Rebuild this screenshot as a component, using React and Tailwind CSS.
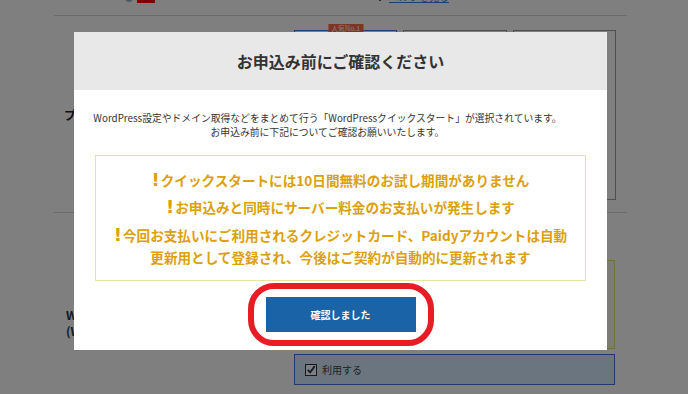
import React from "react";

const Card = ({ active, badge }) => (
    <div className={`relative h-[170px] flex-1 border bg-white ${active ? "border-[#3d7ef5]" : "border-[#9e9e9e]"}`}>
        {badge && (
            <span className="absolute -top-[7px] left-1/2 -translate-x-1/2 bg-[#ff6a48] px-[3px] text-[7px] leading-[9px] text-white">
                {badge}
            </span>
        )}
    </div>
);

const Notice = ({ children, className = "" }) => (
    <p className={`text-[13.6px] font-bold leading-[22px] text-[#dca00c] ${className}`}>
        <span className="mr-[1px] font-['DejaVu_Sans'] text-[18px] font-bold leading-none">!</span>
        {children}
    </p>
);

const App = () => {
    return (
        <div className="relative h-[394px] w-[688px] overflow-hidden bg-white font-['Noto_Sans_CJK_JP',sans-serif]">
            {/* page behind the dialog */}
            <div className="ml-[54px] w-[573px]">
                <div className="flex h-4 border-b border-[#d6d6d6]">
                    <div className="-mt-[8px] ml-[71px] flex h-[11px] items-center gap-[4px]">
                        <span className="h-[8px] w-[8px] rounded-full bg-[#9ab0c8]" />
                        <span className="h-[11px] w-[18px] bg-[#ff0000]" />
                    </div>
                    <div className="-mt-[9px] ml-[222px] flex h-[12px] items-center gap-[6px]">
                        <span className="h-[6px] w-[6px] rotate-45 bg-[#222]" />
                        <span className="text-[10px] leading-[12px] text-[#3c7cf0] underline">ヘルプを見る</span>
                    </div>
                </div>

                <div className="flex items-center border-b border-[#d6d6d6] pb-[12px] pt-[14px]">
                    <div className="w-[240px] pl-[10px] text-[12px] font-bold text-[#222]">プラン</div>
                    <div className="flex w-[322px] gap-[6px]">
                        <Card active badge="人気No.1" />
                        <Card />
                        <Card />
                    </div>
                </div>

                <div className="flex items-center pb-[12px] pt-[47px]">
                    <div className="w-[240px] pl-[12px] text-[12px] font-bold leading-[16px] text-[#333]">
                        <p>WordPressテーマ</p>
                        <p>(WordPress用)</p>
                    </div>
                    <div className="flex w-[321px] flex-col gap-[5px]">
                        <div className="h-[89px] border border-[#e0e080] bg-[#f8f8e2]" />
                        <div className="flex h-[31px] items-center gap-[5px] border-[1.5px] border-[#3874d8] bg-[#d6eaff] px-[10px]">
                            <span className="flex h-[12px] w-[12px] items-center justify-center border border-[#333] bg-white">
                                <svg viewBox="0 0 12 12" className="h-[11px] w-[11px]">
                                    <path d="M2 6.5 L5 9.5 L10.5 2" fill="none" stroke="#1c3a6c" strokeWidth="2.2" />
                                </svg>
                            </span>
                            <span className="text-[10px] text-[#444]">利用する</span>
                        </div>
                    </div>
                </div>
            </div>

            {/* overlay */}
            <div className="absolute inset-0 bg-black/50" />

            {/* dialog */}
            <div className="absolute left-[74px] top-[32px] w-[533px] bg-white">
                <div className="flex h-[58px] items-center justify-center bg-[#e8e8e8]">
                    <h2 className="text-[16px] font-bold text-[#333]">お申込み前にご確認ください</h2>
                </div>
                <div className="px-[21px] pb-[4px] pt-[21px]">
                    <p className="-ml-[13px] mr-[13px] text-center text-[9.8px] leading-[14px] text-[#333]">
                        WordPress設定やドメイン取得などをまとめて行う「WordPressクイックスタート」が選択されています。
                        <br />
                        お申込み前に下記についてご確認お願いいたします。
                    </p>

                    <div className="mt-[16px] border border-[#e8e4a0] px-[14px] pb-[12px] pt-[13px] text-center">
                        <Notice>クイックスタートには10日間無料のお試し期間がありません</Notice>
                        <Notice className="mt-[5px]">お申込みと同時にサーバー料金のお支払いが発生します</Notice>
                        <Notice className="mt-[6px]">今回お支払いにご利用されるクレジットカード、Paidyアカウントは自動更新用として登録され、今後はご契約が自動的に更新されます</Notice>
                    </div>

                    <div className="mt-[2px] flex justify-center">
                        <div className="rounded-[26px] border-[6px] border-[#e81c24] px-[12px] py-[8px]">
                            <button className="flex h-[35px] w-[150px] items-center justify-center bg-[#1b63a7] text-[10px] font-bold text-white">
                                確認しました
                            </button>
                        </div>
                    </div>
                </div>
            </div>
        </div>
    );
};

export default App;
